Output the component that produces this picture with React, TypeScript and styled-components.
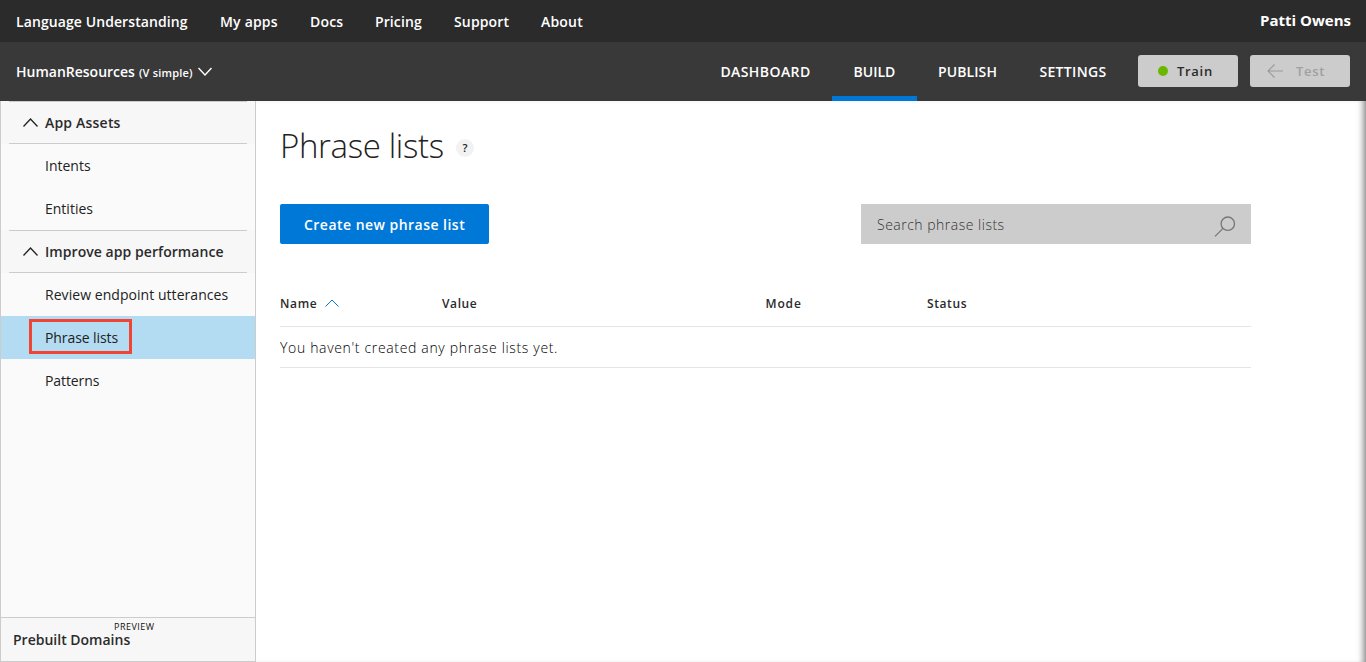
import React from "react";
import styled, { createGlobalStyle } from "styled-components";

const GlobalStyle = createGlobalStyle`
  * { box-sizing: border-box; }
  body {
    margin: 0;
    background: #fff;
    color: #222;
    font-family: "Open Sans", "Noto Sans", sans-serif;
    font-size: 14px;
    overflow: hidden;
  }
`;

const Page = styled.div`
  display: flex;
  flex-direction: column;
  height: 662px;
`;

const Label = styled.span<{ $track?: number; $width?: number }>`
  display: inline-block;
  white-space: nowrap;
  letter-spacing: ${(p) => p.$track ?? 0}px;
  width: ${(p) => (p.$width ? `${p.$width}px` : "auto")};
`;

const TopBar = styled.header`
  display: flex;
  flex: none;
  align-items: center;
  height: 42px;
  padding: 0 15px 0 16px;
  background: #2b2b2b;
  color: #fff;
  font-weight: 600;
`;

const SiteNav = styled.nav`
  display: flex;
  flex: 1;
  gap: 32px;
  padding-top: 1px;
`;

const UserName = styled.div`
  font-size: 15px;
  font-weight: 700;
  padding-bottom: 2px;
`;

const AppBar = styled.div`
  display: flex;
  flex: none;
  height: 59px;
  padding: 0 16px;
  background: #393939;
  color: #fff;
  font-weight: 600;
`;

const AppName = styled.div`
  display: flex;
  flex: 1;
  align-items: center;
`;

const Version = styled.span`
  font-size: 11px;
  letter-spacing: 0.2px;
  padding: 2px 5px 0 4px;
`;

const Tab = styled.a<{ $active?: boolean; $width: number }>`
  display: flex;
  align-items: center;
  justify-content: center;
  width: ${(p) => p.$width}px;
  padding-top: 5px;
  border-bottom: 5px solid ${(p) => (p.$active ? "#0078d7" : "transparent")};
`;

const Actions = styled.div`
  display: flex;
  gap: 12px;
  padding: 13px 0 0 10px;
`;

const ActionButton = styled.button<{ $muted?: boolean }>`
  display: flex;
  align-items: center;
  width: 100px;
  height: 32px;
  padding: 0 0 0 ${(p) => (p.$muted ? 17 : 20)}px;
  border: 0;
  border-radius: 3px;
  background: #ccc;
  color: ${(p) => (p.$muted ? "#a0a0a0" : "#2b2b2b")};
  font: 600 13px "Open Sans", sans-serif;
  gap: ${(p) => (p.$muted ? 13 : 9)}px;
`;

const Dot = styled.i`
  width: 10px;
  height: 10px;
  border-radius: 50%;
  background: #6bb700;
`;

const Body = styled.div`
  display: flex;
  flex: 1;
`;

const Sidebar = styled.aside`
  display: flex;
  flex: none;
  flex-direction: column;
  width: 256px;
  border: 1px solid #ccc;
  border-top: 0;
  background: #fafafa;
`;

const Menu = styled.div`
  flex: 1;
`;

const SectionHead = styled.div`
  height: 43px;
  padding: 0 8px;
  background: #f7f7f7;
  color: #2b2b2b;
  font-weight: 600;
`;

const SectionInner = styled.div`
  display: flex;
  align-items: center;
  gap: 7px;
  height: 43px;
  padding-left: 14px;
  border-top: 1px solid #ccc;
  border-bottom: 1px solid #ccc;
`;

const MenuItem = styled.a<{ $active?: boolean }>`
  display: flex;
  align-items: center;
  height: 43px;
  padding-left: ${(p) => (p.$active ? 28 : 44)}px;
  background: ${(p) => (p.$active ? "#b3dbf2" : "transparent")};
`;

const Highlight = styled.span`
  display: flex;
  align-items: center;
  width: 103px;
  height: 35px;
  margin-bottom: 2px;
  padding: 2px 0 0 13px;
  border: 3px solid #f04535;
`;

const Prebuilt = styled.div`
  position: relative;
  height: 44px;
  padding: 12px 0 0 12px;
  border-top: 1px solid #ccc;
  background: #f7f7f7;
  color: #2b2b2b;
  font-weight: 600;
  line-height: 20px;
`;

const Preview = styled.span`
  position: absolute;
  left: 113px;
  top: 3px;
  color: #111;
  font-size: 9px;
  font-weight: 400;
  letter-spacing: 0.5px;
  line-height: 12px;
`;

const Main = styled.main`
  flex: 1;
  padding: 0 115px 0 24px;
  box-shadow: inset -7px 0 7px -5px #777;
`;

const TitleRow = styled.div`
  display: flex;
  align-items: center;
  height: 103px;
  padding-bottom: 11px;
`;

const Title = styled.h1`
  margin: 0;
  padding-bottom: 3px;
  font-size: 33px;
  font-weight: 300;
  width: 176px;
`;

const Help = styled.span`
  display: flex;
  align-items: center;
  justify-content: center;
  width: 18px;
  height: 18px;
  border-radius: 50%;
  background: #f2f2f2;
  font-size: 11px;
  font-weight: 600;
  margin-top: 1px;
`;

const Toolbar = styled.div`
  display: flex;
  justify-content: space-between;
  height: 40px;
`;

const CreateButton = styled.button`
  width: 209px;
  padding: 0 0 0 24px;
  border: 0;
  border-radius: 2px;
  background: #0078d7;
  color: #fff;
  font: 600 14px "Open Sans", sans-serif;
  text-align: left;
`;

const Search = styled.div`
  display: flex;
  align-items: center;
  justify-content: space-between;
  width: 390px;
  padding: 0 15px 0 16px;
  background: #ccc;
  color: #333;

  svg {
    margin-top: 5px;
  }
`;

const HeadRow = styled.div`
  display: grid;
  grid-template-columns: 162px 323.5px 161.5px 1fr;
  align-items: center;
  height: 47px;
  margin-top: 36px;
  border-bottom: 1px solid #e5e5e5;
  color: #2b2b2b;
  font-size: 12px;
  font-weight: 600;
`;

const HeadCell = styled.div`
  display: flex;
  align-items: center;
`;

const EmptyRow = styled.div`
  display: flex;
  align-items: center;
  height: 41px;
  border-bottom: 1px solid #e5e5e5;
  color: #000;
`;

const Light = styled.span`
  font-weight: 300;
`;

function Chevron({ down, color = "#222", w = 15, h = 9, stroke = 1.3 }: { down?: boolean; color?: string; w?: number; h?: number; stroke?: number }) {
  return (
    <svg width={w} height={h} viewBox={`0 0 ${w} ${h}`} fill="none" stroke={color} strokeWidth={stroke}>
      <path d={down ? `M.5 1 ${w / 2} ${h - 1} ${w - 0.5} 1` : `M.5 ${h - 0.5} ${w / 2} 1 ${w - 0.5} ${h - 0.5}`} />
    </svg>
  );
}

const links: [string, number, number][] = [
  ["Language Understanding", 172, 0.09],
  ["My apps", 58, 0.2],
  ["Docs", 33, 0.2],
  ["Pricing", 47, 0.1],
  ["Support", 55, 0.15],
  ["About", 42, 0.2],
];

export default function App() {
  return (
    <Page>
      <GlobalStyle />
      <TopBar>
        <SiteNav>
          {links.map(([text, width, track]) => (
            <Label key={text} $width={width} $track={track}>{text}</Label>
          ))}
        </SiteNav>
        <UserName><Label>Patti Owens</Label></UserName>
      </TopBar>
      <AppBar>
        <AppName>
          <Label>HumanResources</Label>
          <Version>(V simple)</Version>
          <Chevron down color="#fff" w={14} h={9} stroke={1.4} />
        </AppName>
        <Tab $width={133}><Label $track={0.42}>DASHBOARD</Label></Tab>
        <Tab $width={85} $active><Label>BUILD</Label></Tab>
        <Tab $width={101}><Label $track={0.1}>PUBLISH</Label></Tab>
        <Tab $width={110}><Label $track={0.35}>SETTINGS</Label></Tab>
        <Actions>
          <ActionButton><Dot /><Label $track={0.7}>Train</Label></ActionButton>
          <ActionButton $muted>
            <svg width="16" height="14" viewBox="0 0 16 14" fill="none" stroke="#999" strokeWidth="1.1">
              <path d="M7.5 .5 1 7l6.500 6.500M1 7h15" />
            </svg>
            <Label $track={0.7}>Test</Label>
          </ActionButton>
        </Actions>
      </AppBar>
      <Body>
        <Sidebar>
          <Menu>
            <SectionHead><SectionInner><Chevron /><Label $track={0.2}>App Assets</Label></SectionInner></SectionHead>
            <MenuItem><Label>Intents</Label></MenuItem>
            <MenuItem><Label>Entities</Label></MenuItem>
            <SectionHead><SectionInner><Chevron /><Label $track={0.06}>Improve app performance</Label></SectionInner></SectionHead>
            <MenuItem><Label $track={0.05}>Review endpoint utterances</Label></MenuItem>
            <MenuItem $active><Highlight><Label $track={-0.08}>Phrase lists</Label></Highlight></MenuItem>
            <MenuItem><Label $track={-0.1}>Patterns</Label></MenuItem>
          </Menu>
          <Prebuilt><Label>Prebuilt Domains</Label><Preview>PREVIEW</Preview></Prebuilt>
        </Sidebar>
        <Main>
          <TitleRow>
            <Title><Label $track={-0.35}>Phrase lists</Label></Title>
            <Help>?</Help>
          </TitleRow>
          <Toolbar>
            <CreateButton><Label $track={0.47}>Create new phrase list</Label></CreateButton>
            <Search>
              <Light><Label $track={0.5}>Search phrase lists</Label></Light>
              <svg width="22" height="22" viewBox="0 0 22 22" fill="none" stroke="#777" strokeWidth="1.3">
                <circle cx="13.800" cy="7.700" r="6.700" />
                <path d="M9 12.400 1 20.400" />
              </svg>
            </Search>
          </Toolbar>
          <HeadRow>
            <HeadCell><Label $width={45} $track={0.65}>Name</Label><Chevron color="#0078d7" w={14} h={8} stroke={1} /></HeadCell>
            <HeadCell><Label $track={0.6}>Value</Label></HeadCell>
            <HeadCell><Label $track={0.85}>Mode</Label></HeadCell>
            <HeadCell><Label $track={0.6}>Status</Label></HeadCell>
          </HeadRow>
          <EmptyRow><Light><Label $track={0.66}>You haven't created any phrase lists yet.</Label></Light></EmptyRow>
        </Main>
      </Body>
    </Page>
  );
}
